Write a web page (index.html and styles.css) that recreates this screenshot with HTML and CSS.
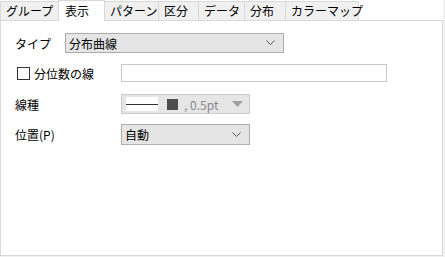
FILE: index.html
```html
<!DOCTYPE html>
<html lang="ja">
<head>
<meta charset="utf-8">
<link rel="stylesheet" href="styles.css">
</head>
<body>
<div class="dialog">
  <div class="tabs">
    <div class="tab t1">グループ</div>
    <div class="tab t2 active">表示</div>
    <div class="tab t3">パターン</div>
    <div class="tab t4">区分</div>
    <div class="tab t5">データ</div>
    <div class="tab t6">分布</div>
    <div class="tab t7">カラーマップ</div>
  </div>
  <div class="panel">
    <div class="row r1">
      <div class="label l1">タイプ</div>
      <div class="select s1"><span>分布曲線</span><svg class="chev" width="9" height="6" viewBox="0 0 9 6"><path d="M0.5 0.5 L4.5 4.5 L8.5 0.5" fill="none" stroke="#555" stroke-width="1"/></svg></div>
    </div>
    <div class="row r2">
      <div class="label l2"><span class="check"></span><span>分位数の線</span></div>
      <div class="textbox"></div>
    </div>
    <div class="row r3">
      <div class="label l2">線種</div>
      <div class="linestyle">
        <div class="linebox"><div class="line"></div></div>
        <div class="swatch"></div>
        <span class="lstext">, 0.5pt</span>
        <svg class="tri" width="11" height="6" viewBox="0 0 11 6"><path d="M0 0 H11 L5.5 6 Z" fill="#a0a0a0"/></svg>
      </div>
    </div>
    <div class="row r4">
      <div class="label l2">位置(P)</div>
      <div class="select s2"><span>自動</span><svg class="chev" width="9" height="6" viewBox="0 0 9 6"><path d="M0.5 0.5 L4.5 4.5 L8.5 0.5" fill="none" stroke="#555" stroke-width="1"/></svg></div>
    </div>
  </div>
</div>
</body>
</html>
```
FILE: styles.css
```css
html, body {
  margin: 0;
  padding: 0;
}
body {
  width: 445px;
  height: 257px;
  background: #f0f0f0;
  font-family: "Noto Sans CJK JP", "Noto Sans", sans-serif;
  font-size: 12px;
  color: #000;
  overflow: hidden;
}
.dialog {
  width: 443px;
  height: 256px;
  display: flex;
  flex-direction: column;
  background: #fff;
}
.tabs {
  display: flex;
  align-items: flex-end;
  height: 20px;
  background: #fff;
}
.tab {
  box-sizing: border-box;
  height: 19px;
  padding-left: 5px;
  line-height: 17px;
  background: #f0f0f0;
  border: 1px solid #d9d9d9;
  border-bottom: none;
  margin-right: -1px;
  white-space: nowrap;
}
.tab.active {
  height: 21px;
  background: #fff;
  position: relative;
  z-index: 1;
  margin-bottom: -1px;
  padding-left: 6px;
  line-height: 19px;
}
.t1 { width: 59px; }
.t2 { width: 47px; }
.t3 { width: 55px; }
.t4 { width: 41px; }
.t5 { width: 47px; }
.t6 { width: 42px; }
.t7 { width: 74px; }
.panel {
  flex: 1;
  border: 1px solid #d9d9d9;
  background: #fff;
  padding: 12px 0 0 14px;
}
.row {
  display: flex;
  align-items: center;
}
.r2 { margin-top: 11px; }
.r3 { margin-top: 12px; }
.r4 { margin-top: 10px; }
.label {
  display: flex;
  align-items: center;
  white-space: nowrap;
}
.l1 { width: 50px; }
.l2 { width: 106px; }
.check {
  box-sizing: border-box;
  width: 13px;
  height: 13px;
  border: 1px solid #333;
  background: #fff;
  margin: 0 4px 0 2px;
}
.select {
  box-sizing: border-box;
  height: 20px;
  background: #e5e5e5;
  border: 1px solid #adadad;
  display: flex;
  align-items: center;
  justify-content: space-between;
  padding: 0 8px 0 3px;
}
.s1 { width: 219px; }
.s2 { width: 129px; height: 21px; }
.textbox {
  box-sizing: border-box;
  width: 266px;
  height: 18px;
  border: 1px solid #c8c8c8;
  background: #fff;
}
.linestyle {
  box-sizing: border-box;
  width: 129px;
  height: 20px;
  background: #e6e6e6;
  border: 1px solid #cccccc;
  display: flex;
  align-items: center;
  padding-left: 4px;
}
.linebox {
  width: 32px;
  height: 14px;
  background: #fff;
  display: flex;
  align-items: center;
}
.line {
  width: 100%;
  height: 1px;
  background: #333;
}
.swatch {
  width: 11px;
  height: 11px;
  background: #4d4d4d;
  margin-left: 9px;
}
.lstext {
  margin-left: 6px;
  color: #8a8a8a;
}
.tri {
  margin-left: auto;
  margin-right: 6px;
}
```
